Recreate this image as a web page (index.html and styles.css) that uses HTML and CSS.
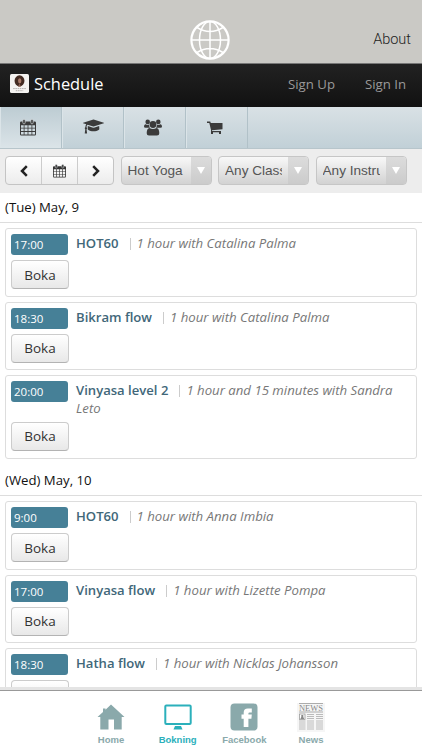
FILE: index.html
```html
<!DOCTYPE html>
<html lang="sv">
<head>
    <meta charset="UTF-8">
    <meta name="viewport" content="width=device-width, initial-scale=1.0">
    <title>Schedule</title>
    <link rel="stylesheet" href="styles.css">
</head>
<body>
    <!-- Shared icons -->
    <svg class="sprite" width="0" height="0">
        <symbol id="calendar" viewBox="0 0 16 17">
            <path fill-rule="evenodd" d="M1.200 2.500H14.800Q16 2.500 16 3.700V15.300Q16 16.500 14.800 16.500H1.200Q0 16.500 0 15.300V3.700Q0 2.500 1.200 2.500zM1 6.300V8.700H3.700V6.300zM4.500 6.300V8.700H7.600V6.300zM8.400 6.300V8.700H11.500V6.300zM12.300 6.300V8.700H15V6.300zM1 9.500V12.100H3.700V9.500zM4.500 9.500V12.100H7.600V9.500zM8.400 9.500V12.100H11.500V9.500zM12.300 9.500V12.100H15V9.500zM1 12.900V15.500H3.700V12.900zM4.500 12.900V15.500H7.600V12.900zM8.400 12.900V15.500H11.500V12.900zM12.300 12.900V15.500H15V12.900z"/>
            <rect class="ring" x="2.800" y=".5" width="2.400" height="4.300" rx="1"/>
            <rect class="ring" x="10.800" y=".5" width="2.400" height="4.300" rx="1"/>
        </symbol>
    </svg>

    <header class="app-header">
        <svg class="globe" viewBox="0 0 40 40">
            <circle cx="20" cy="20" r="18.600" stroke-width="2.200"/>
            <ellipse cx="20" cy="20" rx="10.500" ry="18.600"/>
            <path d="M20 1v38M1 20h38M7 7.500q13 8 26 0M7 32.500q13-8 26 0"/>
        </svg>
        <a class="about">About</a>
    </header>

    <nav class="navbar">
        <svg class="brand-logo" viewBox="0 0 18 18">
            <rect width="18" height="18" rx="1.500" fill="#f5f3f1"/>
            <ellipse cx="9" cy="6.500" rx="4.700" ry="5.200" fill="#442b22"/>
            <ellipse cx="9.200" cy="6.500" rx="1.600" ry="2.400" fill="#a87969"/>
            <path d="M7.500 12l1.500-3 1.500 3z" fill="#8b6254"/>
            <path d="M3 13.800h12M5.500 15.800h7" stroke="#aaa5a2" stroke-width=".8" stroke-dasharray="1.500 .6"/>
        </svg>
        <h1>Schedule</h1>
        <a class="sign-up">Sign Up</a>
        <a>Sign In</a>
    </nav>

    <div class="tabs">
        <a class="tab active"><svg width="16" height="17"><use href="#calendar"/></svg></a>
        <a class="tab"><svg width="21" height="17" viewBox="0 100 2304 1792"><path d="M1774 836l18 316q4 69-82 128t-235 93.500-323 34.500-323-34.500-235-93.500-82-128l18-316 574 181q22 7 48 7t48-7zM2304 512q0 23-22 31l-1120 352q-4 1-10 1t-10-1l-652-206q-43 34-71 111.500t-34 178.500q63 36 63 109 0 69-58 107l58 433q2 14-8 25-9 11-24 11h-192q-15 0-24-11-10-11-8-25l58-433q-58-38-58-107 0-73 65-111 11-207 98-330l-333-104q-22-8-22-31t22-31l1120-352q4-1 10-1t10 1l1120 352q22 8 22 31z"/></svg></a>
        <a class="tab"><svg width="18" height="17" viewBox="0 0 18 17">
            <circle cx="3.700" cy="2.900" r="2.300"/>
            <circle cx="14.300" cy="2.900" r="2.300"/>
            <path d="M0 7.800Q0 5 1.600 5.200Q3.700 6.400 5 5.500Q5 7.500 6 8.700H1.500Q0 8.700 0 7.800zM18 7.800Q18 5 16.400 5.200Q14.300 6.400 13 5.500Q13 7.500 12 8.700H16.500Q18 8.700 18 7.800z"/>
            <circle cx="9" cy="5.500" r="3.400"/>
            <path d="M5.500 9Q9 11.200 12.500 9Q15.300 9.600 15.300 14.200Q15.300 16.500 13 16.500H5Q2.700 16.500 2.700 14.200Q2.700 9.600 5.500 9z"/>
        </svg></a>
        <a class="tab"><svg width="16" height="14" viewBox="0 0 16 14">
            <path d="M0 .5H3.200L3.800 2H15.500V8.200L5 9.200V10H14V13H12V11.300H6V13H4V9L2.300 2H0z"/>
        </svg></a>
    </div>

    <div class="filters">
        <div class="btn-group">
            <button><svg width="8" height="12" viewBox="0 0 8 12"><path class="chevron" d="M6.800 1.200L2 6l4.800 4.800"/></svg></button>
            <button><svg width="13" height="14"><use href="#calendar"/></svg></button>
            <button><svg width="8" height="12" viewBox="0 0 8 12"><path class="chevron" d="M1.200 1.200L6 6l-4.800 4.800"/></svg></button>
        </div>
        <div class="select"><span>Hot Yoga</span><i></i></div>
        <div class="select"><span>Any Class</span><i></i></div>
        <div class="select"><span>Any Instructor</span><i></i></div>
    </div>

    <main class="schedule">
        <h2>(Tue) May, 9</h2>
        <div class="class-item">
            <div class="row"><span class="time">17:00</span><p><b>HOT60</b><em>1 hour with Catalina Palma</em></p></div>
            <button class="book">Boka</button>
        </div>
        <div class="class-item">
            <div class="row"><span class="time">18:30</span><p><b>Bikram flow</b><em>1 hour with Catalina Palma</em></p></div>
            <button class="book">Boka</button>
        </div>
        <div class="class-item tall">
            <div class="row"><span class="time">20:00</span><p><b>Vinyasa level 2</b><em>1 hour and 15 minutes with Sandra Leto</em></p></div>
            <button class="book">Boka</button>
        </div>

        <h2>(Wed) May, 10</h2>
        <div class="class-item">
            <div class="row"><span class="time">9:00</span><p><b>HOT60</b><em>1 hour with Anna Imbia</em></p></div>
            <button class="book">Boka</button>
        </div>
        <div class="class-item">
            <div class="row"><span class="time">17:00</span><p><b>Vinyasa flow</b><em>1 hour with Lizette Pompa</em></p></div>
            <button class="book">Boka</button>
        </div>
        <div class="class-item">
            <div class="row"><span class="time">18:30</span><p><b>Hatha flow</b><em>1 hour with Nicklas Johansson</em></p></div>
            <button class="book">Boka</button>
        </div>
    </main>

    <footer class="tab-bar">
        <a>
            <svg viewBox="0 0 30 30"><path d="M15 2.500L28.500 15H25.700V27.500H18V17.500H12.500V27.500H4.300V15H1.500L7 10V6.500h2.500v1.200z"/></svg>
            Home
        </a>
        <a class="active">
            <svg viewBox="0 0 30 30"><rect x="2.300" y="3.500" width="25.400" height="18.500" rx="1" fill="none" stroke="currentColor" stroke-width="2"/><path d="M12 24h6l1.500 3.500h-9z"/></svg>
            Bokning
        </a>
        <a>
            <svg viewBox="0 0 30 30"><rect x="1.500" y="1.500" width="27" height="27" rx="4"/><path fill="#fff" d="M14.700 25V16.700H12.500V12.600H14.700V10.500Q14.700 6.500 18.800 6.500H22.800V10.500H20.600Q19.400 10.500 19.400 11.600V12.600H22.800L22.400 16.700H19.400V25z"/></svg>
            Facebook
        </a>
        <a>
            <svg viewBox="0 0 30 30">
                <rect x="1" y="1" width="28" height="29" fill="#f6f6f6"/>
                <path stroke="#999" stroke-width=".8" d="M3 1.500h24M3 10h24"/>
                <text x="15" y="8.800" class="news-title" textLength="24" lengthAdjust="spacingAndGlyphs">NEWS</text>
                <path stroke="#bbb" stroke-width="1.100" d="M11 12.500h7M11 14.500h7M11 16.500h7M3 19h6.500M3 21h6.500M3 23h6.500M3 25h6.500M3 27h6.500M11 19h7M11 21h7M11 23h7M11 25h7M11 27h7M20 12.500h7M20 14.500h7M20 16.500h7M20 19h7M20 21h7M20 23h7M20 25h7M20 27h7"/>
                <rect x="3.500" y="12" width="5.500" height="5.500" fill="#fff" stroke="#999" stroke-width=".8"/>
                <path fill="#888" d="M5.300 13h2v2l1 2h-4l1-2z"/>
            </svg>
            News
        </a>
    </footer>
</body>
</html>
```

FILE: styles.css
```css
/* General Styles */
* {
    box-sizing: border-box;
}

body {
    margin: 0;
    height: 750px;
    overflow: hidden;
    display: flex;
    flex-direction: column;
    font-family: "Open Sans", "Noto Sans", sans-serif;
    background-color: #fff;
    color: #111;
}

h1, h2, p {
    margin: 0;
}

button {
    font-family: inherit;
    padding: 0;
}

.sprite {
    position: absolute;
}

/* App Header */
.app-header {
    height: 63px;
    flex: none;
    display: grid;
    grid-template-columns: 1fr 40px 1fr;
    padding: 20px 11px 0 9px;
    background-color: #cac9c5;
}

.globe {
    grid-column: 2;
    width: 40px;
    height: 40px;
    fill: none;
    stroke: #fff;
    stroke-width: 1.5;
}

.about {
    justify-self: end;
    padding-top: 11px;
    font: 300 14.5px/18px Roboto, sans-serif;
    color: #222;
}

/* Navbar */
.navbar {
    height: 44px;
    flex: none;
    display: flex;
    align-items: center;
    padding: 0 16px 4px 10px;
    border-top: 1px solid #777;
    background: linear-gradient(#222, #111);
    font-size: 13.2px;
    color: #999;
}

.brand-logo {
    width: 19px;
    height: 19px;
    margin-right: 5px;
}

h1 {
    font-size: 16.4px;
    font-weight: 400;
    color: #fff;
}

.sign-up {
    margin-left: auto;
    margin-right: 30px;
}

/* Tabs */
.tabs {
    height: 42px;
    flex: none;
    display: flex;
    border-bottom: 1px solid #b7c5cb;
    background: linear-gradient(#d9e1e5, #c1d0d7);
}

.tab {
    width: 62px;
    display: flex;
    align-items: center;
    justify-content: center;
    border-right: 1px solid #b1c1c8;
    box-shadow: inset 1px 0 #dbe4e8;
    fill: #3b3b3b;
}

.tab:nth-child(2) {
    padding-left: 2px;
}

.tab:nth-child(3), .tab:nth-child(4) {
    padding-right: 3px;
}

.tab.active {
    padding-right: 5px;
    background: linear-gradient(#bdccd3, #dbe4e8);
}

.ring {
    stroke: #e6ebed;
    stroke-width: .6;
}

/* Filters */
.filters {
    height: 44px;
    flex: none;
    display: flex;
    align-items: flex-start;
    gap: 6.5px;
    padding: 7px 5px;
    background-color: #ededed;
}

.btn-group {
    width: 109px;
    height: 29px;
    display: flex;
    border: 1px solid #c4c4c4;
    border-radius: 4px;
    background: linear-gradient(#fff, #ececec);
}

.btn-group button {
    flex: 1;
    display: flex;
    align-items: center;
    justify-content: center;
    border: none;
    background: none;
    fill: #333;
}

.btn-group button + button {
    border-left: 1px solid #ccc;
}

.chevron {
    fill: none;
    stroke: #222;
    stroke-width: 2.5;
}

.select {
    width: 91px;
    height: 29px;
    display: flex;
    border: 1px solid #c6c6c6;
    border-radius: 4px;
    overflow: hidden;
    background: linear-gradient(#f8f8f8, #d2d2d2);
    font: 13.6px/27px "Liberation Sans", Arial, sans-serif;
    color: #555;
}

.select span {
    flex: 1;
    margin: 0 6px 0 6px;
    overflow: hidden;
    white-space: nowrap;
}

.select i {
    width: 20px;
    display: flex;
    align-items: center;
    justify-content: center;
    background: linear-gradient(#dcdcdc, #cbcbcb);
}

.select i::after {
    content: "";
    border: 4px solid transparent;
    border-top: 7px solid #fff;
    border-bottom: none;
}

/* Schedule */
.schedule {
    flex: 1;
    min-height: 0;
    overflow: hidden;
}

h2 {
    height: 30px;
    margin-bottom: 5.4px;
    padding-left: 5px;
    border-bottom: 1px solid #ddd;
    font-size: 13.2px;
    font-weight: 400;
    line-height: 29px;
}

.class-item + h2 {
    height: 31.5px;
    line-height: 32px;
}

.class-item {
    margin: 0 5px 5px;
    padding: 5px;
    height: 68.3px;
    border: 1px solid #ddd;
    border-radius: 3px;
}

.class-item.tall {
    height: 84.5px;
}

.row {
    display: flex;
    gap: 8px;
}

.time {
    width: 57px;
    height: 21px;
    flex: none;
    padding-left: 3px;
    border-radius: 3px;
    background-color: #468097;
    font-size: 11.5px;
    font-weight: 500;
    line-height: 21px;
    color: #fff;
}

.row p {
    font-size: 13.2px;
    line-height: 18px;
    color: #777;
}

.row b {
    margin-right: 11px;
    font-size: 13.1px;
    font-weight: 600;
    color: #416779;
}

.row em::before {
    content: "";
    display: inline-block;
    height: 12px;
    margin-right: 6px;
    border-left: 1px solid #ccc;
    vertical-align: -2px;
}

.book {
    display: block;
    width: 58px;
    height: 29px;
    margin-top: 5px;
    border: 1px solid #ccc;
    border-bottom-color: #b3b3b3;
    border-radius: 4px;
    background: linear-gradient(#fff, #e8e8e8);
    font-size: 13.5px;
    color: #333;
}

/* Bottom Tab Bar */
.tab-bar {
    height: 63px;
    flex: none;
    display: flex;
    justify-content: center;
    padding: 12px 0 0;
    border-top: 3px solid #e4e4e4;
    box-shadow: inset 0 1px #999;
    font: bold 9.5px/12px "Liberation Sans", Arial, sans-serif;
    color: #8aa9ab;
}

.tab-bar a {
    width: 66.7px;
    display: flex;
    flex-direction: column;
    align-items: center;
    gap: 2px;
}

.tab-bar svg {
    width: 30px;
    height: 30px;
    fill: currentColor;
}

.tab-bar .active {
    color: #2bb0bb;
}

.news-title {
    font: 8px "Liberation Serif", serif;
    text-anchor: middle;
    fill: #888;
}
```
